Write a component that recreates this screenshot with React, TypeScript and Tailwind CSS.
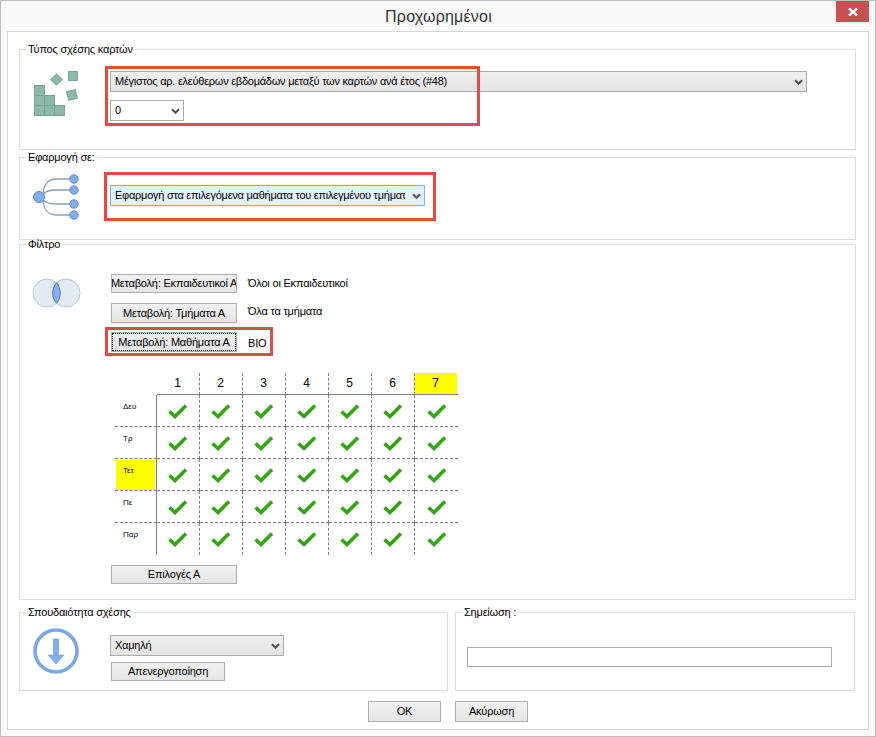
import type { ReactNode } from 'react'

const days = ['Δευ', 'Τρ', 'Τετ', 'Πε', 'Παρ']
const periods = [1, 2, 3, 4, 5, 6, 7]

function Chevron() {
    return (
        <svg className="absolute right-[4px] top-[8px] pointer-events-none" width="9" height="7" viewBox="0 0 9 7" fill="none" stroke="#555" strokeWidth="2">
            <path d="M1 1.2 4.5 4.8 8 1.2" />
        </svg>
    )
}

function Select({ value, className }: { value: string; className: string }) {
    return (
        <div className={`relative ${className}`}>
            <select defaultValue={value} className="appearance-none block w-full h-full border border-inherit bg-transparent pl-[4px] pr-[19px] text-[11px] tracking-[-0.25px] leading-[19px] text-black outline-none">
                <option>{value}</option>
            </select>
            <Chevron />
        </div>
    )
}

function Button({ children, className = '' }: { children: ReactNode; className?: string }) {
    return (
        <button className={`flex items-center justify-center overflow-hidden whitespace-nowrap border border-[#adadad] bg-linear-to-b from-[#f0f0f0] to-[#e5e5e5] text-[11px] tracking-[-0.2px] text-black ${className}`}>
            {children}
        </button>
    )
}

function Group({ title, className, children }: { title: string; className: string; children: ReactNode }) {
    return (
        <fieldset className={`min-w-0 border border-[#dcdcdc] p-0 ${className}`}>
            <legend className="ml-[6px] px-[2px] h-[9px] leading-[9px] text-[11px] tracking-[-0.2px] text-black whitespace-nowrap">{title}</legend>
            {children}
        </fieldset>
    )
}

function CardsIcon() {
    return (
        <svg width="50" height="50" viewBox="0 0 50 50" fill="#8db9aa" stroke="#74a695" strokeWidth="1">
            <rect x="2.5" y="17.5" width="10" height="10" />
            <rect x="2.5" y="27.5" width="10" height="10" />
            <rect x="2.5" y="37.5" width="10" height="10" />
            <rect x="12.5" y="27.5" width="10" height="10" />
            <rect x="12.5" y="37.5" width="10" height="10" />
            <rect x="22.5" y="37.5" width="10" height="10" />
            <rect x="20.5" y="7.5" width="8" height="8" transform="rotate(45 24.5 11.5)" />
            <rect x="36.5" y="3.5" width="9" height="9" />
            <rect x="35.5" y="22.5" width="9" height="9" transform="rotate(-15 40 27)" />
        </svg>
    )
}

function TreeIcon() {
    return (
        <svg width="50" height="50" viewBox="0 0 50 50" fill="none">
            <g stroke="#8f9fb3" strokeWidth="1.3">
                <path d="M11 24C11 13 16 7 24 7H41" />
                <path d="M11 23C13 19 18 18 24 18H41" />
                <path d="M11 27C13 31 18 32 24 32H41" />
                <path d="M11 26C11 37 16 43 24 43H41" />
            </g>
            <g fill="#82aeee" stroke="#5f8acb">
                <circle cx="7" cy="25" r="5.5" />
                <circle cx="42" cy="7" r="4.2" />
                <circle cx="42" cy="18" r="4.2" />
                <circle cx="42" cy="32" r="4.2" />
                <circle cx="42" cy="43" r="4.2" />
            </g>
        </svg>
    )
}

function VennIcon() {
    return (
        <svg width="50" height="30" viewBox="0 0 50 30" fill="none">
            <circle cx="15" cy="15" r="14" fill="#e2ebf3" stroke="#b5c7da" />
            <circle cx="34" cy="15" r="14" fill="#e2ebf3" stroke="#b5c7da" />
            <path d="M24.5 4.7C19.5 10.5 19.5 19.5 24.5 25.3 29.5 19.5 29.5 10.5 24.5 4.7Z" fill="#82aeee" stroke="#5b80b8" />
        </svg>
    )
}

function ArrowIcon() {
    return (
        <svg width="46" height="46" viewBox="0 0 46 46" fill="none">
            <circle cx="23" cy="23" r="21" fill="#fff" stroke="#7aa8e4" strokeWidth="3.6" />
            <path d="M20.5 11H25.5V27H31L23 36 15 27H20.5Z" fill="#7faee8" stroke="#6b9ad6" strokeWidth="0.6" />
        </svg>
    )
}

function Check() {
    return (
        <svg width="20" height="16" viewBox="0 0 20 16" fill="none">
            <path d="M1.5 8.5 7 13.5 18 2.5" stroke="#33a512" strokeWidth="3.6" />
        </svg>
    )
}

function Matrix() {
    return (
        <div className="ml-[5px] mt-[21px] grid grid-cols-[42px_repeat(7,43px)] grid-rows-[22px_repeat(5,32px)] w-[343px]">
            <div />
            {periods.map((p) => (
                <div key={p} className={`border-b border-[#7f7f7f] ${p < 7 ? 'border-r border-r-[#7f7f7f] [border-right-style:dashed]' : ''}`}>
                    <div className={`h-[21px] pr-px text-center text-[12px] leading-[21px] text-black ${p === 7 ? 'bg-[#ffff00] w-[42px]' : ''}`}>{p}</div>
                </div>
            ))}
            {days.map((d, r) => (
                <div key={d} className="contents">
                    <div className={`border-r border-[#7f7f7f] ${r < 4 ? 'border-b border-b-[#7f7f7f] [border-bottom-style:dashed]' : ''}`}>
                        <div className={`ml-px mt-px h-[30px] w-[39px] pl-[7px] pt-[5px] text-[8px] leading-[12px] text-black ${d === 'Τετ' ? 'bg-[#ffff00]' : ''}`}>{d}</div>
                    </div>
                    {periods.map((p) => (
                        <div
                            key={p}
                            className={`flex items-center justify-center border-[#7f7f7f] border-dashed ${r < 4 ? 'border-b' : ''} ${p < 7 ? 'border-r' : ''}`}
                        >
                            <Check />
                        </div>
                    ))}
                </div>
            ))}
        </div>
    )
}

export default function App() {
    return (
        <div className="relative w-[876px] h-[737px] border border-[#bdbdbd] bg-[#f9f9f9] font-['Liberation_Sans',sans-serif] text-black">
            <div className="relative h-[30px] pt-[6px] pl-[1px] text-center text-[16px] tracking-[0.2px] leading-[20px] text-[#333]">
                Προχωρημένοι
                <div className="absolute right-[6px] top-0 flex h-[21px] w-[33px] items-center justify-center bg-[#c75050]">
                    <svg width="10" height="8" viewBox="0 0 10 8" stroke="#fff" strokeWidth="2.4" fill="none">
                        <path d="M1 0.5 9 7.5M9 0.5 1 7.5" />
                    </svg>
                </div>
            </div>

            <div className="ml-[6px] h-[699px] w-[862px] border border-[#d5d5d5] bg-white pl-[11px] pt-[13px]">
                <Group title="Τύπος σχέσης καρτών" className="h-[105px] w-[837px]">
                    <div className="flex">
                        <div className="w-[90px] shrink-0 pl-[12px] pt-[14px]">
                            <CardsIcon />
                        </div>
                        <div className="flex flex-col gap-[8px] pt-[17px]">
                            <Select
                                value="Μέγιστος αρ. ελεύθερων εβδομάδων μεταξύ των καρτών ανά έτος (#48)"
                                className="h-[21px] w-[697px] border-[#ababab] bg-linear-to-b from-[#f0f0f0] to-[#e3e3e3]"
                            />
                            <Select value="0" className="h-[21px] w-[74px] border-[#ababab] bg-white" />
                        </div>
                    </div>
                </Group>

                <Group title="Εφαρμογή σε:" className="mt-[3px] h-[87px] w-[837px]">
                    <div className="flex">
                        <div className="w-[90px] shrink-0 pl-[12px] pt-[10px]">
                            <TreeIcon />
                        </div>
                        <div className="pt-[23px]">
                            <Select
                                value="Εφαρμογή στα επιλεγόμενα μαθήματα του επιλεγμένου τμήματος"
                                className="h-[21px] w-[315px] border-[#7eb4ea] bg-[#e5f1fb]"
                            />
                        </div>
                    </div>
                </Group>

                <Group title="Φίλτρο" className="h-[360px] w-[837px]">
                    <div className="flex">
                        <div className="w-[90px] shrink-0 pl-[12px] pt-[29px]">
                            <VennIcon />
                        </div>
                        <div className="pt-[25px]">
                            <div className="flex h-[29px] pl-px">
                                <Button className="h-[19px] w-[126px]">Μεταβολή: Εκπαιδευτικοί Α</Button>
                                <span className="ml-[11px] text-[11px] tracking-[-0.2px] leading-[18px]">Όλοι οι Εκπαιδευτικοί</span>
                            </div>
                            <div className="flex h-[29px] pl-px">
                                <Button className="h-[20px] w-[126px]">Μεταβολή: Τμήματα Α</Button>
                                <span className="ml-[11px] -mt-[1px] text-[11px] tracking-[-0.2px] leading-[18px]">Όλα τα τμήματα</span>
                            </div>
                            <div className="flex h-[20px] pl-px">
                                <Button className="h-[20px] w-[126px] border-[#3399ff] outline-1 outline-dotted outline-black -outline-offset-2">Μεταβολή: Μαθήματα Α</Button>
                                <span className="ml-[11px] mt-[2px] text-[11px] tracking-[-0.2px] leading-[18px]">ΒΙΟ</span>
                            </div>
                            <Matrix />
                            <Button className="ml-px mt-[10px] h-[19px] w-[126px]">Επιλογές Α</Button>
                        </div>
                    </div>
                </Group>

                <div className="mt-[8px] flex w-[836px] gap-[7px]">
                    <Group title="Σπουδαιότητα σχέσης" className="h-[83px] w-[429px]">
                        <div className="flex">
                            <div className="w-[90px] shrink-0 pl-[13px] pt-[11px]">
                                <ArrowIcon />
                            </div>
                            <div className="flex flex-col gap-[6px] pt-[18px]">
                                <Select value="Χαμηλή" className="h-[21px] w-[174px] border-[#ababab] bg-linear-to-b from-[#f0f0f0] to-[#e3e3e3]" />
                                <Button className="ml-px h-[19px] w-[114px]">Απενεργοποίηση</Button>
                            </div>
                        </div>
                    </Group>
                    <Group title="Σημείωση :" className="h-[83px] w-[400px]">
                        <input className="ml-[11px] mt-[30px] block h-[20px] w-[365px] border border-[#acacac] bg-white outline-none" />
                    </Group>
                </div>

                <div className="mt-[10px] flex gap-[14px] pl-[349px]">
                    <Button className="h-[21px] w-[73px]">OK</Button>
                    <Button className="h-[21px] w-[73px]">Ακύρωση</Button>
                </div>
            </div>

            {/* red annotation boxes over the form */}
            <div className="pointer-events-none absolute left-[104px] top-[65px] h-[60px] w-[375px] border-[3px] border-[#e64a45]" />
            <div className="pointer-events-none absolute left-[103px] top-[171px] h-[49px] w-[332px] border-[3px] border-[#e64a45]" />
            <div className="pointer-events-none absolute left-[104px] top-[326px] h-[29px] w-[168px] border-[3px] border-[#e64a45]" />
        </div>
    )
}
